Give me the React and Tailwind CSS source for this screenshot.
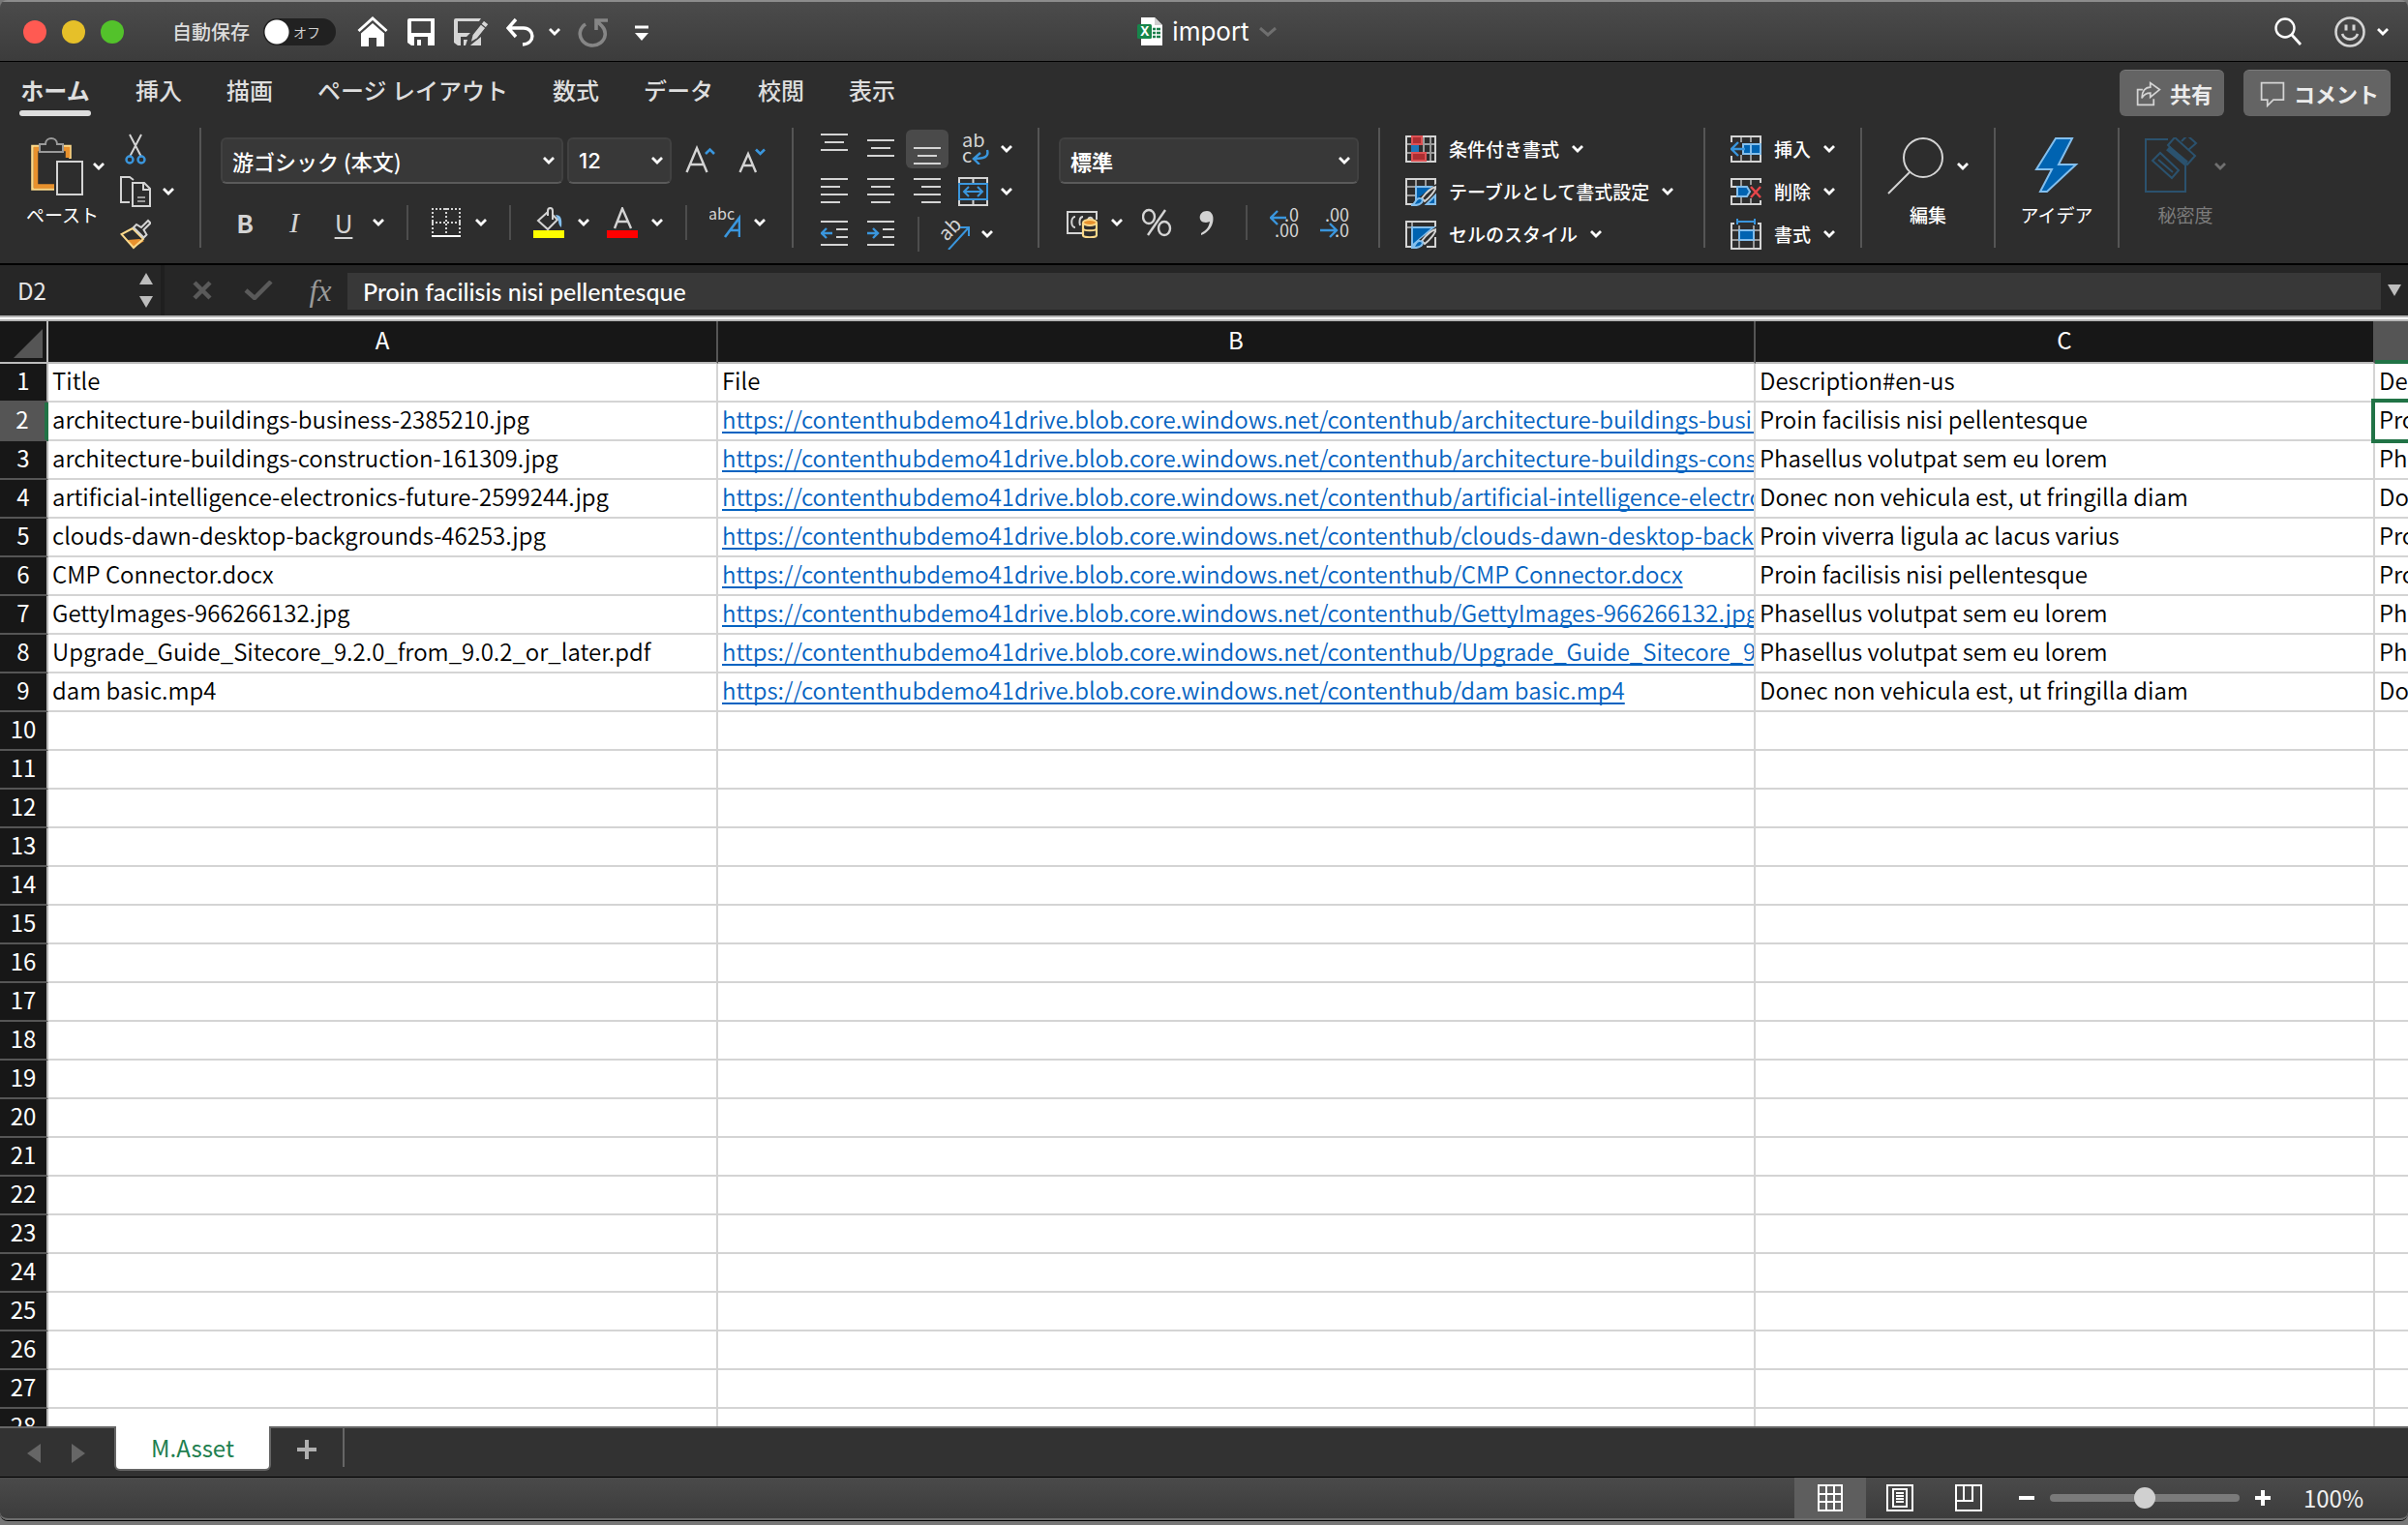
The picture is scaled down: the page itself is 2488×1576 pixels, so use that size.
import clsx from 'clsx'

const HOST = 'https://contenthubdemo41drive.blob.core.windows.net/contenthub/'

const assets = [
  { title: 'architecture-buildings-business-2385210.jpg', text: 'Proin facilisis nisi pellentesque' },
  { title: 'architecture-buildings-construction-161309.jpg', text: 'Phasellus volutpat sem eu lorem' },
  { title: 'artificial-intelligence-electronics-future-2599244.jpg', text: 'Donec non vehicula est, ut fringilla diam' },
  { title: 'clouds-dawn-desktop-backgrounds-46253.jpg', text: 'Proin viverra ligula ac lacus varius' },
  { title: 'CMP Connector.docx', text: 'Proin facilisis nisi pellentesque' },
  { title: 'GettyImages-966266132.jpg', text: 'Phasellus volutpat sem eu lorem' },
  { title: 'Upgrade_Guide_Sitecore_9.2.0_from_9.0.2_or_later.pdf', text: 'Phasellus volutpat sem eu lorem' },
  { title: 'dam basic.mp4', text: 'Donec non vehicula est, ut fringilla diam' },
]

const rowCount = 28
const tabs = ['ホーム', '挿入', '描画', 'ページ レイアウト', '数式', 'データ', '校閲', '表示']

function Chevron({ className = 'text-white' }) {
  return (
    <svg viewBox="0 0 12 10" className={clsx('h-2.5 w-3 shrink-0', className)} fill="none" stroke="currentColor" strokeWidth="2.8" aria-hidden="true">
      <path d="M1 2l5 5 5-5" />
    </svg>
  )
}

function Divider() {
  return <div className="h-[124px] w-0.5 shrink-0 bg-[#555]" />
}

function SmallDivider({ className }) {
  return <div className={clsx('h-9 w-0.5 shrink-0 bg-[#4d4d4d]', className)} />
}

function SplitButton({ label, gap = 'gap-[14px]', children }) {
  return (
    <button type="button" aria-label={label} className={clsx('flex shrink-0 items-center', gap)}>
      {children}
      <Chevron />
    </button>
  )
}

function Icon({ children, className = 'size-8', box = '0 0 32 32' }) {
  return (
    <svg viewBox={box} className={clsx('shrink-0', className)} fill="none" stroke="#d4d4d4" strokeWidth="2" aria-hidden="true">
      {children}
    </svg>
  )
}

function Select({ label, value, className }) {
  return (
    <div className={clsx('grid shrink-0 items-center', className)}>
      <select
        aria-label={label}
        className="col-start-1 row-start-1 h-12 w-full appearance-none rounded-md border-2 border-[#414141] border-b-[#5a5a5a] bg-[#383838] pl-2.5 text-[22px] text-white"
      >
        <option>{value}</option>
      </select>
      <span className="pointer-events-none col-start-1 row-start-1 mr-[9px] justify-self-end">
        <Chevron />
      </span>
    </div>
  )
}

/* ---------- title bar ---------- */

function TitleBar() {
  return (
    <header className="grid h-16 shrink-0 grid-cols-[1fr_auto_1fr] items-center border-t-2 border-b border-t-[#8c8c8c] border-b-black bg-linear-to-b from-[#4b4b4b] to-[#3c3c3c]">
      <div className="flex items-center pl-6">
        <div className="flex gap-4">
          <button type="button" aria-label="閉じる" className="size-6 rounded-full bg-[#ff5a52]" />
          <button type="button" aria-label="しまう" className="size-6 rounded-full bg-[#e6c029]" />
          <button type="button" aria-label="フルスクリーン" className="size-6 rounded-full bg-[#53c22b]" />
        </div>
        <label htmlFor="autosave" className="ml-[50px] text-xl font-medium text-[#dcdcdc]">
          自動保存
        </label>
        <div className="ml-3.5 grid w-[75px] items-center rounded-full bg-[#212121]">
          <input
            id="autosave"
            type="checkbox"
            role="switch"
            className="col-start-1 row-start-1 h-7 w-full appearance-none rounded-full bg-[radial-gradient(circle_at_14px_14px,#fff_12px,transparent_13px)]"
          />
          <span className="pointer-events-none col-start-1 row-start-1 pr-4 text-right text-sm text-[#d0d0d0]">オフ</span>
        </div>
        <div className="ml-[22px] flex items-center gap-[18px]">
          <button type="button" aria-label="ホーム">
            <Icon>
              <path d="M1.500 15L16 2l14.500 13" stroke="#fff" strokeWidth="3" />
              <path d="M4 17.500L16 7l12 10.500V31h-8v-9h-8v9H4z" fill="#fff" stroke="none" />
            </Icon>
          </button>
          <button type="button" aria-label="保存">
            <Icon>
              <path fillRule="evenodd" d="M2 4a2 2 0 0 1 2-2h26v28H6l-4-3zM6 5v12h20V5zM9 21v9h3v-6h4v6h7v-9z" fill="#fff" stroke="none" />
            </Icon>
          </button>
          <button type="button" aria-label="名前を付けて保存">
            <Icon className="h-8 w-9" box="0 0 36 32">
              <path fillRule="evenodd" d="M0 4a2 2 0 0 1 2-2h26l-2 3H4v12h13l-4 4H7v9h3v-6h4l-2 6H4l-4-3zM18 29l10-8v9H17z" fill="#d6d6d6" stroke="none" />
              <path d="M17 27l2-8L31 4l5 4-12 15zM28 8l5 4" fill="#d6d6d6" stroke="#444" strokeWidth="1.200" />
            </Icon>
          </button>
          <SplitButton label="元に戻す" gap="gap-3">
            <Icon>
              <path d="M10 3L2 12l8 9M2 12h16c11 0 13 16-1 17" stroke="#fff" strokeWidth="3.400" />
            </Icon>
          </SplitButton>
          <button type="button" aria-label="やり直し">
            <Icon>
              <path d="M8 8a13 12 0 1 0 17 2L20 5M19 14V4h12" stroke="#868686" strokeWidth="3.600" />
            </Icon>
          </button>
          <button type="button" aria-label="クイック アクセスのカスタマイズ">
            <Icon>
              <path d="M9 11h14" stroke="#fff" strokeWidth="3" />
              <path d="M9 17h14l-7 8z" fill="#fff" stroke="none" />
            </Icon>
          </button>
        </div>
      </div>

      <h1 className="flex items-center gap-2.5 pl-1.5 font-[Inter,sans-serif] text-[26px] text-white">
        <Icon className="h-8 w-[26px]" box="0 0 26 32">
          <path d="M4 1h14l8 8v21H4z" fill="#fff" stroke="none" />
          <path d="M18 1v8h8z" fill="#cfcfcf" stroke="none" />
          <path d="M16 13h3m1 0h4M16 17h3m1 0h4M16 21h3m1 0h4" stroke="#1d7f4c" strokeWidth="2.600" />
          <rect y="8" width="15" height="15" rx="1.500" fill="#17864b" stroke="none" />
          <text x="3" y="20" fontSize="13" fontWeight="700" fill="#fff" stroke="none">X</text>
        </Icon>
        import
        <svg viewBox="0 0 18 10" className="h-2.5 w-[18px]" fill="none" stroke="#6f6f6f" strokeWidth="3" aria-hidden="true">
          <path d="M1 1l8 7 8-7" />
        </svg>
      </h1>

      <div className="flex items-center justify-end gap-8 pr-5">
        <button type="button" aria-label="検索">
          <Icon>
            <circle cx="13" cy="12" r="9.500" stroke="#fff" strokeWidth="2.400" />
            <path d="M20 19l9 10" stroke="#fff" strokeWidth="2.800" />
          </Icon>
        </button>
        <SplitButton label="フィードバック" gap="gap-3">
          <Icon>
            <circle cx="16" cy="16" r="14.500" strokeWidth="2.600" />
            <path d="M12 8.500v6M20 8.500v6" strokeWidth="3" />
            <path d="M8 18c3 7.500 13 7.500 16 0" strokeWidth="2.600" />
          </Icon>
        </SplitButton>
      </div>
    </header>
  )
}

/* ---------- ribbon ---------- */

function RibbonTabs() {
  return (
    <div className="flex h-[68px] shrink-0 items-start justify-between bg-[#2d2d2d] pt-2 pr-[18px] pl-5">
      <nav className="flex gap-[46px]">
        {tabs.map((tab, i) => (
          <a
            key={tab}
            href={`#${tab}`}
            className={clsx(
              'flex flex-col items-center pt-1 text-2xl leading-[34px] whitespace-nowrap text-[#dedede]',
              i === 0 ? 'font-bold' : 'font-medium',
            )}
          >
            {tab}
            {i === 0 && <span className="mt-1 h-1.5 w-[74px] rounded-full bg-[#dedede]" />}
          </a>
        ))}
      </nav>
      <div className="flex gap-5 text-[22px] font-bold text-[#ececec]">
        <button type="button" className="flex h-12 items-center gap-2 rounded-md border-t border-[#7a7a7a] bg-[#646464] pr-3 pl-4">
          <Icon className="size-7">
            <path d="M9 11H3v18h19v-7" />
            <path d="M18 3l11 8-11 9v-5c-5 0-8 2-10 6 0-8 4-13 10-13z" />
          </Icon>
          共有
        </button>
        <button type="button" className="flex h-12 items-center gap-2 rounded-md border-t border-[#7a7a7a] bg-[#646464] pr-3 pl-4">
          <Icon className="size-7">
            <path d="M3 3h26v20H17l-7 7v-7H3z" />
          </Icon>
          コメント
        </button>
      </div>
    </div>
  )
}

function ClipboardGroup() {
  return (
    <div className="flex w-[206px] shrink-0 pl-[27px]">
      <button type="button" className="flex flex-col items-start gap-2 pt-2.5 text-[19px] leading-6 text-white">
        <span className="flex items-center gap-2.5 pl-[5px]">
          <Icon className="h-[60px] w-[54px]" box="0 0 54 60">
            <path d="M10 9H1.500v44.500H24M32 9h8.500v13" stroke="#fbd98a" strokeWidth="2.600" />
            <path d="M10 12H5v38.500h19M33 12h5v9" stroke="#e8912d" strokeWidth="4.500" />
            <path d="M9 15V7h6c0-8 12-8 12 0h6v8z" fill="#2d2d2d" stroke="#9a9a9a" />
            <path d="M27 25h26v34H27z" fill="#2d2d2d" />
          </Icon>
          <Chevron />
        </span>
        ペースト
      </button>
      <div className="ml-4 flex flex-col">
        <button type="button" aria-label="切り取り" className="flex h-11 items-center">
          <Icon>
            <path d="M10 1l12 23M22 1L10 24" />
            <circle cx="10" cy="27" r="3.500" stroke="#3a96dd" strokeWidth="2.400" />
            <circle cx="22" cy="27" r="3.500" stroke="#3a96dd" strokeWidth="2.400" />
          </Icon>
        </button>
        <span className="flex h-11 items-center">
          <SplitButton label="コピー" gap="gap-3">
            <Icon>
              <path d="M10 27H1V1h9l4 3" />
              <path d="M13 7h12l6 6v18H13zM24 7v7h7" />
              <path d="M18 22h8M18 26h8" stroke="#9a9a9a" />
            </Icon>
          </SplitButton>
        </span>
        <button type="button" aria-label="書式のコピー" className="flex h-11 items-center">
          <Icon>
            <path d="M8 22l12-1 5 2-11 7z" fill="#e8912d" stroke="none" />
            <path d="M13 10L1.500 16 14 30l10-9z" stroke="#fbd98a" />
            <path d="M14 9l3-3 5 3 7-7 2.500 2.500-7 7 3 5-3 3z" fill="#2d2d2d" />
          </Icon>
        </button>
      </div>
    </div>
  )
}

function FontGroup() {
  return (
    <div className="w-[610px] shrink-0 pt-2.5">
      <div className="flex items-center gap-1 pl-5">
        <Select label="フォント" value="游ゴシック (本文)" className="w-[354px] font-medium" />
        <Select label="フォント サイズ" value="12" className="w-[108px] font-[Inter,sans-serif] font-medium" />
        <div className="ml-2.5 flex gap-5">
          <button type="button" aria-label="フォント サイズの拡大">
            <Icon>
              <path d="M1.500 28L12 3l10.500 25M5 20h14" strokeWidth="2.400" />
              <path d="M21 9l4.500-4.500L30 9" stroke="#3a96dd" strokeWidth="2.600" />
            </Icon>
          </button>
          <button type="button" aria-label="フォント サイズの縮小">
            <Icon>
              <path d="M4.500 28L13 9l8 19M7 21h11" strokeWidth="2.400" />
              <path d="M21 4.500L25.500 9 30 4.500" stroke="#3a96dd" strokeWidth="2.600" />
            </Icon>
          </button>
        </div>
      </div>
      <div className="mt-4 flex h-12 items-center pl-[35px] text-[26px] leading-8 text-[#d4d4d4]">
        <div className="flex gap-[31px]">
          <button type="button" className="w-5 font-bold">B</button>
          <button type="button" className="w-5 font-['Liberation_Serif',serif] text-3xl leading-8 italic">I</button>
          <SplitButton label="下線" gap="gap-5">
            <span className="w-5 text-center underline decoration-2 underline-offset-4">U</span>
          </SplitButton>
        </div>
        <SmallDivider className="mx-[23px]" />
        <SplitButton label="罫線">
          <Icon>
            <path d="M1 2h30M1 16h30M2 1v26M16 1v26M30 1v26" strokeDasharray="2 2" />
            <path d="M1 30h30" stroke="#fff" />
          </Icon>
        </SplitButton>
        <SmallDivider className="mx-[23px]" />
        <div className="flex gap-[18px]">
          <SplitButton label="塗りつぶしの色">
            <Icon>
              <path d="M0 28h32" stroke="#ff0" strokeWidth="8" />
              <path d="M15 5L5 14l10 9 10-10-5-5M15 9V4c0-4 5-4 5 0v9" />
              <path d="M23 8c5 0 7 3 6 13-4-3-2-7-4-9z" fill="#83beec" stroke="none" />
            </Icon>
          </SplitButton>
          <SplitButton label="フォントの色">
            <Icon>
              <path d="M0 28h32" stroke="#f00" strokeWidth="8" />
              <path d="M8 22L16 1.500 25 22M11 15h11" strokeWidth="2.400" />
            </Icon>
          </SplitButton>
        </div>
        <SmallDivider className="mx-[23px]" />
        <SplitButton label="ふりがな">
          <Icon>
            <text x="-1" y="13" fontSize="16" fill="#d4d4d4" stroke="none">abc</text>
            <path d="M16 31L31 11v20M21 24h10" stroke="#3a96dd" strokeWidth="2.600" />
          </Icon>
        </SplitButton>
      </div>
    </div>
  )
}

const lineIcons = [
  [
    { label: '上揃え', d: 'M0 1h28M4 9h20M0 17h28' },
    { label: '上下中央揃え', d: 'M0 7h28M4 15h20M0 23h28' },
    { label: '下揃え', d: 'M0 15h28M4 23h20M0 31h28', active: true },
  ],
  [
    { label: '左揃え', d: 'M0 3h28M0 11h20M0 19h28M0 27h20' },
    { label: '中央揃え', d: 'M0 3h28M4 11h20M0 19h28M4 27h20' },
    { label: '右揃え', d: 'M0 3h28M8 11h20M0 19h28M8 27h20' },
  ],
  [
    { label: 'インデントを減らす', d: 'M0 3h28M16 11h12M16 19h12M0 27h28', arrow: 'M12 15H1M6 10l-5 5 5 5' },
    { label: 'インデントを増やす', d: 'M0 3h28M16 11h12M16 19h12M0 27h28', arrow: 'M0 15h11M6 10l5 5-5 5' },
  ],
]

function LineButtons({ items }) {
  return items.map(({ label, d, arrow, active }) => (
    <button
      key={label}
      type="button"
      aria-label={label}
      className={clsx('flex h-10 w-11 items-center justify-center rounded-md', active && 'bg-[#4a4a4a]')}
    >
      <Icon className="h-8 w-7" box="0 0 28 32">
        <path d={d} />
        {arrow && <path d={arrow} stroke="#3a96dd" strokeWidth="2.400" />}
      </Icon>
    </button>
  ))
}

function AlignmentGroup() {
  return (
    <div className="w-[252px] shrink-0 pl-5">
      <div className="flex h-11 items-center gap-1">
        <LineButtons items={lineIcons[0]} />
        <div className="ml-1.5">
          <SplitButton label="折り返して全体を表示する" gap="gap-3">
            <Icon>
              <text x="4" y="14" fontSize="20" fill="#d4d4d4" stroke="none">ab</text>
              <text x="4" y="30" fontSize="20" fill="#d4d4d4" stroke="none">c</text>
              <path d="M30 17c2 7-3 9-13 9M23 20l-7 6 6 6" stroke="#3a96dd" strokeWidth="2.400" />
            </Icon>
          </SplitButton>
        </div>
      </div>
      <div className="flex h-11 items-center gap-1">
        <LineButtons items={lineIcons[1]} />
        <div className="ml-1.5">
          <SplitButton label="セルを結合して中央揃え" gap="gap-3">
            <Icon>
              <path d="M1 8V2h29v6M1 24v6h29v-6M15.500 2v6M15.500 24v6" />
              <path d="M1 8h29v16H1zM6 16h19M11 11l-5 5 5 5M20 11l5 5-5 5" stroke="#3a96dd" />
            </Icon>
          </SplitButton>
        </div>
      </div>
      <div className="flex h-11 items-center gap-1">
        <LineButtons items={lineIcons[2]} />
        <SmallDivider className="mx-3" />
        <div className="ml-1">
          <SplitButton label="文字の方向" gap="gap-3">
            <Icon>
              <text x="8" y="24" fontSize="20" fill="#d4d4d4" stroke="none" transform="rotate(-45 8 24)">ab</text>
              <path d="M10 32L31 9M22 9h9v9" stroke="#3a96dd" />
            </Icon>
          </SplitButton>
        </div>
      </div>
    </div>
  )
}

function NumberGroup() {
  return (
    <div className="w-[350px] shrink-0 pt-2.5 pl-5">
      <Select label="表示形式" value="標準" className="w-[310px] font-bold" />
      <div className="mt-4 flex h-12 items-center pl-2">
        <SplitButton label="通貨表示形式">
          <Icon>
            <path d="M16 27H1V5h30v8" />
            <path d="M9 10c-5 0-5 11 0 11M17 10c-4 0-4 6-3 9M22 13c1-3 4-3 5 0" />
            <path d="M17 16v13c0 3 14 3 14 0V16" fill="#2d2d2d" stroke="#fbd98a" strokeWidth="2.200" />
            <ellipse cx="24" cy="16" rx="7" ry="3" fill="#e8912d" stroke="#fbd98a" />
            <path d="M17 22c0 3 14 3 14 0" stroke="#fbd98a" />
          </Icon>
        </SplitButton>
        <div className="ml-5 flex gap-5">
          <button type="button" aria-label="パーセント スタイル">
            <Icon>
              <ellipse cx="7" cy="10" rx="6" ry="7" strokeWidth="2.400" />
              <ellipse cx="23" cy="22" rx="6" ry="7" strokeWidth="2.400" />
              <path d="M24 3L6 29" strokeWidth="2.400" />
            </Icon>
          </button>
          <button type="button" aria-label="桁区切りスタイル">
            <Icon>
              <path d="M15 4c-9 0-10 12-1 12 2 0 3-1 4-1-1 6-4 9-9 12v2C24 24 25 4 15 4z" fill="#d4d4d4" stroke="none" />
            </Icon>
          </button>
        </div>
        <SmallDivider className="mx-[23px]" />
        <div className="flex gap-5">
          <button type="button" aria-label="小数点以下の表示桁数を増やす">
            <Icon>
              <text x="15" y="15" fontSize="18" fill="#d4d4d4" stroke="none">.0</text>
              <text x="5" y="31" fontSize="18" fill="#d4d4d4" stroke="none">.00</text>
              <path d="M17 11H1M8 4l-7 7 7 7" stroke="#3a96dd" strokeWidth="2.400" />
            </Icon>
          </button>
          <button type="button" aria-label="小数点以下の表示桁数を減らす">
            <Icon>
              <text x="5" y="15" fontSize="18" fill="#d4d4d4" stroke="none">.00</text>
              <text x="15" y="31" fontSize="18" fill="#d4d4d4" stroke="none">.0</text>
              <path d="M0 24h16M10 17l7 7-7 7" stroke="#3a96dd" strokeWidth="2.400" />
            </Icon>
          </button>
        </div>
      </div>
    </div>
  )
}

function BrushOverlay() {
  return (
    <>
      <path d="M32 8L14 22l4 5L32 17z" fill="#2d2d2d" stroke="none" />
      <path d="M32 11c-6 1-12 8-15 12l3 3c5-4 10-10 12-15z" fill="#2d2d2d" />
      <path d="M6 30c5 0 4-8 9-7 5 0 4 8-9 7z" fill="#0063b1" stroke="#83beec" />
    </>
  )
}

function MenuRow({ label, children }) {
  return (
    <button type="button" className="flex h-11 items-center gap-[13px] text-[19px] font-medium whitespace-nowrap text-white">
      <Icon>{children}</Icon>
      {label}
      <Chevron />
    </button>
  )
}

function StylesGroup() {
  return (
    <div className="w-[334px] shrink-0 pl-[26px]">
      <MenuRow label="条件付き書式">
        <path d="M7 3v26M19 3v26M26 3v26M1 11h30M1 20h30" stroke="#9a9a9a" />
        <path d="M1 3h30v26H1z" />
        <path d="M10 11v9" stroke="#1f75b8" strokeWidth="8" />
        <path d="M7 3h10v8H7zM7 20h14v8H7z" fill="#ad2e31" stroke="#dd5154" />
      </MenuRow>
      <MenuRow label="テーブルとして書式設定">
        <path d="M11 3v26M21 3v8M1 11h30M1 20h10" stroke="#9a9a9a" />
        <path d="M31 9V3H1v26h10" />
        <path d="M11 11h18L11 28zM31 20v9H22z" fill="#0063b1" stroke="#83beec" />
        <BrushOverlay />
      </MenuRow>
      <MenuRow label="セルのスタイル">
        <path d="M7 3v26M1 9h30" stroke="#9a9a9a" />
        <path d="M31 9V3H1v26h6M22 29h9V19" />
        <path d="M7 9h22L7 28z" fill="#0063b1" stroke="#83beec" />
        <BrushOverlay />
      </MenuRow>
    </div>
  )
}

function CellsGroup() {
  return (
    <div className="w-[160px] shrink-0 pl-[26px]">
      <MenuRow label="挿入">
        <path d="M11 3v6M21 3v6M11 22v7M21 22v7" stroke="#9a9a9a" />
        <path d="M1 9V3h30v26H1v-6" />
        <path d="M13 11h18v10H13z" fill="#0063b1" stroke="#83beec" />
        <path d="M21 11v10" stroke="#83beec" />
        <path d="M15 16H1M8 9l-7 7 7 7" stroke="#3a96dd" strokeWidth="2.400" />
      </MenuRow>
      <MenuRow label="削除">
        <path d="M11 3v8M21 3v6M11 21v8M21 23v6" stroke="#9a9a9a" />
        <path d="M7 11H1V3h30v4M7 21H1v8h30v-4" />
        <path d="M7 11h10l3 5-3 5H7z" fill="#0063b1" stroke="#83beec" />
        <path d="M21 11l10 11M31 11L21 22" stroke="#e8464a" strokeWidth="2.400" />
      </MenuRow>
      <MenuRow label="書式">
        <path d="M9 7v24M24 7v24M1 12h30M1 22h30" stroke="#9a9a9a" />
        <path d="M4 5H1v26h30V5h-3" />
        <path d="M9 12h15v10H9z" fill="#0063b1" stroke="#83beec" />
        <path d="M7 3h18M7 0v6M25 0v6" stroke="#3a96dd" />
      </MenuRow>
    </div>
  )
}

function BigButton({ label, className, children }) {
  return (
    <button type="button" className={clsx('flex shrink-0 flex-col items-center gap-2 pt-2.5 text-[19px] leading-6', className)}>
      <span className="flex items-center gap-3">{children}</span>
      {label}
    </button>
  )
}

function Ribbon() {
  return (
    <div className="flex h-[140px] shrink-0 items-start bg-[#2d2d2d]">
      <ClipboardGroup />
      <Divider />
      <FontGroup />
      <Divider />
      <AlignmentGroup />
      <Divider />
      <NumberGroup />
      <Divider />
      <StylesGroup />
      <Divider />
      <CellsGroup />
      <Divider />
      <BigButton label="編集" className="w-[136px] font-medium text-white">
        <Icon className="size-[60px]" box="0 0 60 60">
          <circle cx="37" cy="21" r="20" />
          <path d="M23 36L1 58" />
        </Icon>
        <Chevron />
      </BigButton>
      <Divider />
      <BigButton label="アイデア" className="w-[126px] text-white">
        <Icon className="size-[60px]" box="0 0 60 60">
          <path d="M29 1h17L32 28h18L20 56h-7l12-23H9z" fill="#0063b1" stroke="#83beec" />
        </Icon>
      </BigButton>
      <Divider />
      <BigButton label="秘密度" className="w-[136px] text-[#7c7c7c]">
        <Icon className="size-[60px]" box="0 0 60 60">
          <g stroke="#2b526e">
            <path d="M24 2H1v54h41V28" />
            <path d="M8 24l8-8 19 18-7 8zM14 23l15 13" />
            <path d="M24 8l7-8 21 19-8 9z" />
            <path d="M24 11l19 16" strokeWidth="6" />
            <path d="M38 4l6-6 9 8-8 7" />
          </g>
        </Icon>
        <Chevron className="text-[#707070]" />
      </BigButton>
    </div>
  )
}

/* ---------- formula bar ---------- */

function FormulaBar() {
  return (
    <div className="flex h-[54px] shrink-0 items-stretch border-t-2 border-black bg-[#262626]">
      <div className="flex w-[170px] shrink-0 items-center border-r-4 border-[#1f1f1f] pl-[18px]">
        <input aria-label="名前ボックス" defaultValue="D2" className="w-[126px] bg-transparent text-2xl text-[#e6e6e6]" />
        <div className="flex flex-col gap-3">
          <button type="button" aria-label="前へ">
            <Icon className="h-3 w-3.5" box="0 0 14 12">
              <path d="M0 12L7 0l7 12z" fill="#bdbdbd" stroke="none" />
            </Icon>
          </button>
          <button type="button" aria-label="次へ">
            <Icon className="h-3 w-3.5" box="0 0 14 12">
              <path d="M0 0h14L7 12z" fill="#bdbdbd" stroke="none" />
            </Icon>
          </button>
        </div>
      </div>
      <div className="flex shrink-0 items-center gap-8 pr-3 pl-[29px]">
        <button type="button" aria-label="キャンセル">
          <Icon className="size-5" box="0 0 20 20">
            <path d="M2 2l16 16M18 2L2 18" stroke="#5a5a5a" strokeWidth="4.500" />
          </Icon>
        </button>
        <button type="button" aria-label="入力">
          <Icon className="h-5 w-8" box="0 0 32 20">
            <path d="M3 10l9 8L29 1" stroke="#5a5a5a" strokeWidth="4.500" />
          </Icon>
        </button>
        <button type="button" className="w-8 font-['Liberation_Serif',serif] text-[32px] leading-8 text-[#9a9a9a] italic">
          fx
        </button>
      </div>
      <input
        aria-label="数式バー"
        defaultValue="Proin facilisis nisi pellentesque"
        className="my-2 h-[38px] min-w-0 flex-1 bg-[#383838] pl-4 font-[Lato,sans-serif] text-[25px] font-medium text-white"
      />
      <button type="button" aria-label="数式バーの展開" className="flex w-7 shrink-0 items-center justify-center">
        <Icon className="h-3 w-3.5" box="0 0 14 12">
          <path d="M0 0h14L7 12z" fill="#bdbdbd" stroke="none" />
        </Icon>
      </button>
    </div>
  )
}

/* ---------- sheet ---------- */

function Sheet() {
  const rows = Array.from({ length: rowCount }, (_, i) => {
    if (i === 0) return ['Title', 'File', 'Description#en-us', 'Description']
    const asset = assets[i - 1]
    if (!asset) return ['', '', '', '']
    return [asset.title, HOST + asset.title, asset.text, asset.text]
  })

  return (
    <main className="min-h-0 flex-1 overflow-hidden bg-white">
      <table className="w-full table-fixed border-separate border-spacing-0 text-2xl leading-[34px] font-[350] whitespace-nowrap text-black">
        <colgroup>
          <col className="w-[50px]" />
          <col className="w-[692px]" />
          <col className="w-[1072px]" />
          <col className="w-[640px]" />
          <col />
        </colgroup>
        <thead>
          <tr className="h-11 bg-[#171717] leading-[38px] text-white">
            <th aria-label="すべて選択" className="border-r-2 border-b-2 border-[#bbb] p-0 align-bottom">
              <svg viewBox="0 0 30 30" className="mr-1 mb-1 ml-auto size-[30px]" aria-hidden="true">
                <path d="M30 0v30H0z" fill="#555" />
              </svg>
            </th>
            {['A', 'B', 'C'].map((name) => (
              <th key={name} className="border-r-2 border-b-2 border-r-[#555] border-b-[#bbb] p-0 align-top font-normal">
                {name}
              </th>
            ))}
            <th aria-label="D" className="border-b-4 border-[#217346] bg-[#555] p-0" />
          </tr>
        </thead>
        <tbody>
          {rows.map(([title, file, desc, last], i) => (
            <tr key={i} className="h-10">
              <th
                className={clsx(
                  'border-b-2 border-b-[#555] p-0 align-top font-normal text-white',
                  i === 1 ? 'border-r-4 border-r-[#217346] bg-[#555]' : 'border-r-2 border-r-[#bbb] bg-[#171717]',
                )}
              >
                {i + 1}
              </th>
              <td className="overflow-hidden border-r-2 border-b-2 border-[#d4d4d4] p-0 pl-1 align-top">{title}</td>
              <td className="overflow-hidden border-r-2 border-b-2 border-[#d4d4d4] p-0 pl-1 align-top">
                {i > 0 && file ? (
                  <a href={file} className="block overflow-hidden text-[#0563c1] underline decoration-2 underline-offset-3 [text-decoration-skip-ink:none]">
                    {file}
                  </a>
                ) : (
                  file
                )}
              </td>
              <td className="overflow-hidden border-r-2 border-b-2 border-[#d4d4d4] p-0 pl-1 align-top">{desc}</td>
              {i === 1 ? (
                <td className="relative border-b-2 border-[#d4d4d4] p-0 pl-1 align-top">
                  <div className="overflow-hidden">{last}</div>
                  <span className="pointer-events-none absolute -inset-1 border-4 border-r-0 border-[#217346]" />
                </td>
              ) : (
                <td className="overflow-hidden border-b-2 border-[#d4d4d4] p-0 pl-1 align-top">{last}</td>
              )}
            </tr>
          ))}
        </tbody>
      </table>
    </main>
  )
}

/* ---------- bottom bars ---------- */

function SheetTabs() {
  return (
    <div className="flex h-[52px] shrink-0 items-start border-t-2 border-[#666] bg-[#323232]">
      <div className="flex gap-8 pt-4 pl-7">
        <button type="button" aria-label="前のシート">
          <Icon className="h-5 w-3.5" box="0 0 14 20">
            <path d="M14 0v20L0 10z" fill="#666" stroke="none" />
          </Icon>
        </button>
        <button type="button" aria-label="次のシート">
          <Icon className="h-5 w-3.5" box="0 0 14 20">
            <path d="M0 0v20l14-10z" fill="#666" stroke="none" />
          </Icon>
        </button>
      </div>
      <button
        type="button"
        className="-mt-0.5 ml-[30px] h-[46px] w-[162px] rounded-b-md border-2 border-t-0 border-[#666] bg-white text-2xl leading-[42px] text-[#1f8050]"
      >
        M.Asset
      </button>
      <button type="button" aria-label="シートの追加" className="flex h-11 w-[74px] items-center justify-center">
        <Icon className="size-5" box="0 0 20 20">
          <path d="M10 0v20M0 10h20" stroke="#b0b0b0" strokeWidth="4" />
        </Icon>
      </button>
      <div className="h-10 w-0.5 bg-[#666]" />
    </div>
  )
}

function StatusBar() {
  return (
    <footer className="flex h-[45px] shrink-0 items-stretch justify-end rounded-b-lg border-t border-b-2 border-t-black border-b-[#6c6c6c] bg-linear-to-b from-[#4a4a4a] to-[#3c3c3c] pr-[46px]">
      <button type="button" aria-label="標準" className="flex w-[74px] items-center justify-center bg-[#5e5e5e]">
        <Icon className="size-7" box="0 0 28 28">
          <path d="M2 1h24v26H2zM10 1v26M18 1v26M2 10h24M2 18h24" stroke="#fff" />
        </Icon>
      </button>
      <button type="button" aria-label="ページ レイアウト" className="flex w-[70px] items-center justify-center">
        <Icon className="size-7" box="0 0 28 28">
          <path d="M1 1h26v26H1zM7 5h14v18H7zM10 9h8M10 12h8M10 15h8M10 18h8" stroke="#fff" />
        </Icon>
      </button>
      <button type="button" aria-label="改ページ プレビュー" className="flex w-[72px] items-center justify-center">
        <Icon className="size-7" box="0 0 28 28">
          <path d="M1 1h26v26H1zM1 17h17V1M9 1v16" stroke="#fff" />
        </Icon>
      </button>
      <div className="flex items-center gap-4 pl-4">
        <button type="button" aria-label="縮小">
          <Icon className="size-4" box="0 0 16 16">
            <path d="M0 8h16" stroke="#fff" strokeWidth="4" />
          </Icon>
        </button>
        <input
          type="range"
          aria-label="ズーム"
          min="0"
          max="100"
          defaultValue="50"
          className="h-2 w-[196px] appearance-none rounded-full bg-[#7a7a7a] [&::-webkit-slider-thumb]:size-[22px] [&::-webkit-slider-thumb]:appearance-none [&::-webkit-slider-thumb]:rounded-full [&::-webkit-slider-thumb]:bg-[#d0d0d0]"
        />
        <button type="button" aria-label="拡大">
          <Icon className="size-4" box="0 0 16 16">
            <path d="M0 8h16M8 0v16" stroke="#fff" strokeWidth="4" />
          </Icon>
        </button>
      </div>
      <output className="ml-[34px] self-center text-2xl text-[#f0f0f0]">100%</output>
    </footer>
  )
}

export default function App() {
  return (
    <div lang="ja" className="flex h-screen flex-col overflow-hidden bg-[#777] pb-1 font-['Noto_Sans_CJK_JP',sans-serif]">
      <div className="flex min-h-0 flex-1 flex-col overflow-hidden rounded-lg border-b border-black">
        <TitleBar />
        <RibbonTabs />
        <Ribbon />
        <FormulaBar />
        <div className="h-1.5 shrink-0 border-y-2 border-[#b5b5b5] bg-white" />
        <Sheet />
        <SheetTabs />
        <StatusBar />
      </div>
    </div>
  )
}
